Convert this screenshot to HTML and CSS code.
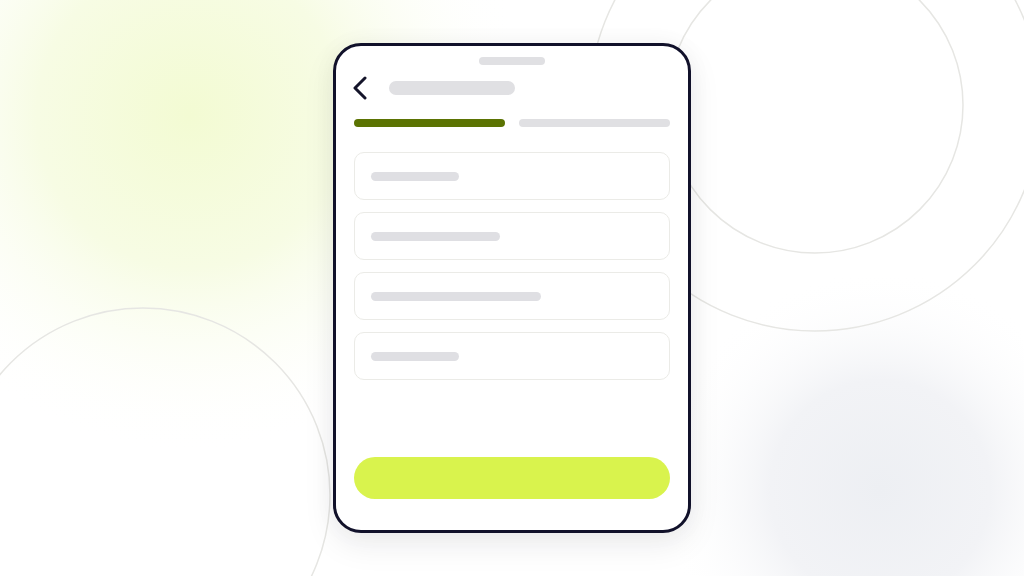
FILE: index.html
```html
<!DOCTYPE html>
<html lang="en">
<head>
<meta charset="utf-8">
<title>Form step</title>
<link rel="stylesheet" href="styles.css">
</head>
<body>
<div class="stage">
  <svg class="decor" width="1024" height="576" viewBox="0 0 1024 576" aria-hidden="true">
    <defs>
      <radialGradient id="glowY" cx="190" cy="115" r="340" gradientUnits="userSpaceOnUse">
        <stop offset="0" stop-color="#f3fbd3"/>
        <stop offset="0.45" stop-color="#f7fce4"/>
        <stop offset="1" stop-color="#ffffff" stop-opacity="0"/>
      </radialGradient>
      <radialGradient id="glowG" cx="880" cy="490" r="220" gradientUnits="userSpaceOnUse">
        <stop offset="0" stop-color="#edeff3"/>
        <stop offset="0.5" stop-color="#f2f3f6"/>
        <stop offset="1" stop-color="#ffffff" stop-opacity="0"/>
      </radialGradient>
    </defs>
    <rect width="1024" height="576" fill="#ffffff"/>
    <rect width="1024" height="576" fill="url(#glowG)"/>
    <rect width="1024" height="576" fill="url(#glowY)"/>
    <circle cx="815" cy="105" r="148" fill="none" stroke="#e6e6e3" stroke-width="1.5"/>
    <circle cx="815" cy="105" r="226" fill="none" stroke="#e6e6e3" stroke-width="1.5"/>
    <circle cx="143" cy="495" r="187" fill="none" stroke="#e6e6e3" stroke-width="1.5"/>
  </svg>

  <div class="phone">
    <div class="handle"></div>
    <div class="header">
      <svg class="back" width="16" height="24" viewBox="0 0 16 24" aria-hidden="true">
        <path d="M13 2 L3 12 L13 22" fill="none" stroke="#14142a" stroke-width="3" stroke-linecap="round" stroke-linejoin="round"/>
      </svg>
      <div class="title-bar"></div>
    </div>
    <div class="progress">
      <div class="seg seg-done"></div>
      <div class="seg"></div>
    </div>
    <div class="fields">
      <div class="field"><div class="ph" style="width:88px"></div></div>
      <div class="field"><div class="ph" style="width:129px"></div></div>
      <div class="field"><div class="ph" style="width:170px"></div></div>
      <div class="field"><div class="ph" style="width:88px"></div></div>
    </div>
    <div class="spacer"></div>
    <div class="cta"></div>
  </div>
</div>
</body>
</html>
```

FILE: styles.css
```css
* { box-sizing: border-box; }
html, body {
  margin: 0;
  padding: 0;
  width: 1024px;
  height: 576px;
  overflow: hidden;
  font-family: "Inter", "Liberation Sans", sans-serif;
  background: #ffffff;
}
.stage {
  position: relative;
  width: 1024px;
  height: 576px;
  display: flex;
  align-items: center;
  justify-content: center;
}
.decor {
  position: absolute;
  left: 0;
  top: 0;
  z-index: 0;
}
.phone {
  position: relative;
  z-index: 1;
  width: 358px;
  height: 490px;
  background: #ffffff;
  border: 3px solid #11112a;
  border-radius: 28px;
  box-shadow: 0 12px 32px rgba(20, 20, 40, 0.08), 0 0 24px rgba(20, 20, 40, 0.04);
  padding: 11px 18px 31px;
  display: flex;
  flex-direction: column;
}
.handle {
  align-self: center;
  width: 66px;
  height: 8px;
  border-radius: 4px;
  background: #e0e0e3;
}
.header {
  display: flex;
  align-items: center;
  gap: 21px;
  margin-top: 11px;
  height: 24px;
}
.back {
  display: block;
  margin-left: -2px;
}
.title-bar {
  width: 126px;
  height: 14px;
  border-radius: 7px;
  background: #e0e0e3;
}
.progress {
  display: flex;
  gap: 14px;
  margin-top: 19px;
}
.seg {
  flex: 1;
  height: 8px;
  border-radius: 4px;
  background: #e0e0e3;
}
.seg-done {
  background: #5b7302;
}
.fields {
  display: flex;
  flex-direction: column;
  gap: 12px;
  margin-top: 25px;
}
.field {
  height: 48px;
  border: 1.5px solid #ebebe7;
  border-radius: 10px;
  padding-left: 16px;
  display: flex;
  align-items: center;
}
.ph {
  height: 9px;
  border-radius: 5px;
  background: #dfdfe3;
}
.spacer { flex: 1; }
.cta {
  height: 42px;
  border-radius: 21px;
  background: #d9f34d;
}
```
